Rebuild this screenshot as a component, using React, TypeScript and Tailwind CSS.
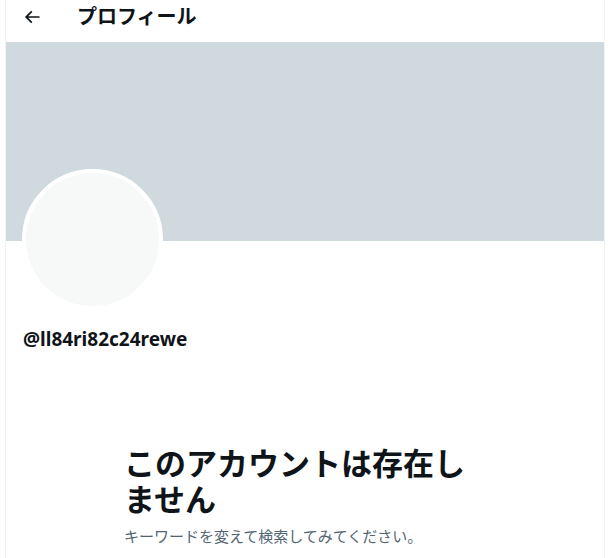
import React from 'react'

const jp = { fontFamily: '"Noto Sans", "Noto Sans CJK JP", sans-serif' }

const BackArrow = () => (
  <svg viewBox="0 0 24 24" className="w-5 h-5" fill="#0f1419">
    <path d="M7.414 13l5.043 5.04-1.414 1.42L3.586 12l7.457-7.46 1.414 1.42L7.414 11H21v2H7.414z" />
  </svg>
)

export default function App() {
  return (
    <div className="min-h-[558px] w-[610px] bg-white" style={jp}>
      <div className="ml-[5px] w-[600px] min-h-[558px] border-x border-[#eff3f4] text-[#0f1419]">
        {/* header */}
        <div className="h-[42px] flex items-center pb-[8px]">
          <div className="ml-[10px] w-[32px] flex justify-center">
            <BackArrow />
          </div>
          <h2 className="ml-[29px] text-[20px] font-bold leading-6">プロフィール</h2>
        </div>

        {/* banner */}
        <div className="h-[199px] bg-[#cfd9de]" />

        {/* avatar + name */}
        <div className="px-4">
          <div className="-mt-[72px] w-[141px] h-[141px] rounded-full bg-[#f7f9f9] border-4 border-white" />
          <div className="mt-[17px] ml-[1px] text-[19px] font-bold leading-6">@ll84ri82c24rewe</div>
        </div>

        {/* empty state */}
        <div className="w-[362px] mx-auto mt-[94px]">
          <h1 className="text-[31px] font-bold leading-[36px]">このアカウントは存在しません</h1>
          <p className="mt-[9px] text-[15px] text-[#536471] leading-5">キーワードを変えて検索してみてください。</p>
        </div>
      </div>
    </div>
  )
}
